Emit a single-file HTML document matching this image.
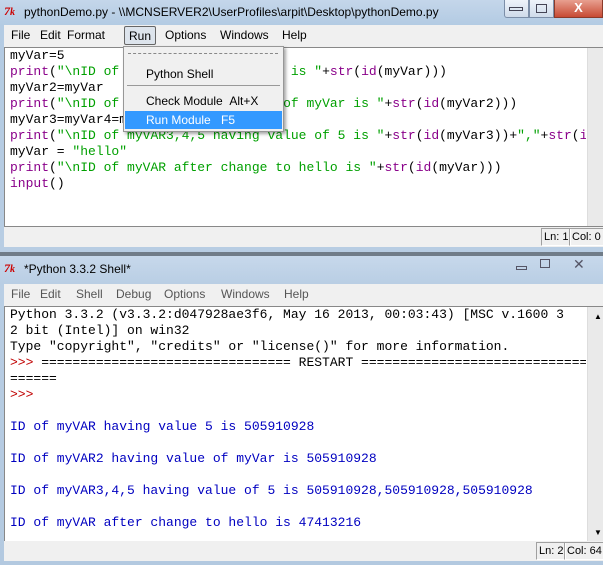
<!DOCTYPE html>
<html><head><style>
*{margin:0;padding:0;box-sizing:border-box}
body{width:603px;height:565px;overflow:hidden;background:#aac3dc;font-family:"Liberation Sans",sans-serif;position:relative}
.abs{position:absolute}
.title{font-size:12px;color:#000;white-space:nowrap}
.menu{font-size:12px;color:#000;white-space:nowrap;background:#f0f0f0}
.menu span{position:absolute;top:3px}
.code{font-family:"Liberation Mono",monospace;font-size:13px;line-height:16px;white-space:pre;background:#fff}
.p{color:#8a008a}.g{color:#00a000}.b{color:#0000c0}.r{color:#c00000}
.tk{color:#c00;font-style:italic;font-weight:bold;font-family:"Liberation Serif",serif;font-size:12px}
.btn{position:absolute;border:1px solid #7c8ea8;border-radius:0 0 3px 3px;background:linear-gradient(#eef3fa,#cfdbea)}
.sb{background:#eaeaea;border-left:1px solid #ddd}
.status{background:#f0f0f0;font-size:11px}
.cell{position:absolute;border:1px solid #a0a0a0;border-right-color:#fff;border-bottom-color:#fff;padding:1px 2px;height:18px;line-height:15px;font-size:11px}
</style></head><body>
<!-- top window -->
<div class="abs" style="left:0;top:0;width:603px;height:252px;background:linear-gradient(#c4d6ea,#b3cbe3 25px,#b8cde3)"></div>
<div class="abs tk" style="left:4px;top:4px">7<span style="font-size:10px">k</span></div>
<div class="abs title" style="left:24px;top:5px">pythonDemo.py - \\MCNSERVER2\UserProfiles\arpit\Desktop\pythonDemo.py</div>
<div class="btn" style="left:504px;top:0;width:25px;height:18px;border-top:none;border-radius:0 0 0 3px"></div>
<div class="btn" style="left:529px;top:0;width:25px;height:18px;border-top:none;border-radius:0"></div>
<div class="abs" style="left:554px;top:0;width:49px;height:18px;background:linear-gradient(#e8a090,#c74a34);border:1px solid #8b3a2a;border-top:none;color:#fff;font-weight:bold;text-align:center;font-size:13px">X</div>
<div class="abs" style="left:509px;top:7px;width:14px;height:4px;border:1px solid #445"></div>
<div class="abs" style="left:536px;top:4px;width:11px;height:9px;border:1px solid #445"></div>

<div class="abs menu" style="left:4px;top:25px;width:599px;height:22px">
<span style="left:7px">File</span><span style="left:36px">Edit</span><span style="left:63px">Format</span>
<span style="left:120px;top:1px;width:32px;height:19px;border:1px solid #666;border-radius:2px;background:#dde4ec;padding:2px 0 0 4px">Run</span>
<span style="left:161px">Options</span><span style="left:216px">Windows</span><span style="left:278px">Help</span></div>
<div class="abs" style="left:4px;top:47px;width:599px;height:180px;background:#fff;border:1px solid #888"></div>
<div class="abs code" style="left:10px;top:48px;width:576px;height:176px;overflow:hidden">myVar=5
<span class="p">print</span>(<span class="g">"\nID of myVAR having value 5 is "</span>+<span class="p">str</span>(<span class="p">id</span>(myVar)))
myVar2=myVar
<span class="p">print</span>(<span class="g">"\nID of myVAR2 having value of myVar is "</span>+<span class="p">str</span>(<span class="p">id</span>(myVar2)))
myVar3=myVar4=myVar5=5
<span class="p">print</span>(<span class="g">"\nID of myVAR3,4,5 having value of 5 is "</span>+<span class="p">str</span>(<span class="p">id</span>(myVar3))+<span class="g">","</span>+<span class="p">str</span>(<span class="p">id</span>(myVar4))
myVar = <span class="g">"hello"</span>
<span class="p">print</span>(<span class="g">"\nID of myVAR after change to hello is "</span>+<span class="p">str</span>(<span class="p">id</span>(myVar)))
<span class="p">input</span>()</div>
<div class="abs sb" style="left:587px;top:48px;width:16px;height:178px"></div>
<div class="abs status" style="left:4px;top:227px;width:599px;height:20px"></div>
<div class="cell" style="left:541px;top:228px">Ln: 1</div>
<div class="cell" style="left:569px;top:228px;width:40px">Col: 0</div>

<!-- dropdown -->
<div class="abs" style="left:123px;top:46px;width:161px;height:86px;background:#f0f0f0;border:1px solid #979797;box-shadow:2px 2px 3px rgba(0,0,0,.35);font-size:12px">
<div class="abs" style="left:4px;top:6px;width:150px;border-top:1px dashed #888"></div>
<div class="abs" style="left:22px;top:20px">Python Shell</div>
<div class="abs" style="left:3px;top:38px;width:153px;border-top:1px solid #999"></div>
<div class="abs" style="left:22px;top:47px">Check Module&nbsp;&nbsp;Alt+X</div>
<div class="abs" style="left:1px;top:64px;width:157px;height:18px;background:#3399ff;color:#fff"><span style="position:absolute;left:21px;top:2px">Run Module</span><span style="position:absolute;left:96px;top:2px">F5</span></div>
</div>

<!-- bottom window -->
<div class="abs" style="left:0;top:252px;width:603px;height:5px;background:#707c88"></div>
<div class="abs" style="left:0;top:256px;width:603px;height:309px;background:linear-gradient(#c7d8eb,#b9cee4 28px,#b3c9e0)"></div>
<div class="abs tk" style="left:4px;top:261px">7<span style="font-size:10px">k</span></div>
<div class="abs title" style="left:24px;top:262px">*Python 3.3.2 Shell*</div>
<div class="abs" style="left:516px;top:266px;width:11px;height:4px;border:1px solid #556"></div>
<div class="abs" style="left:540px;top:259px;width:10px;height:9px;border:1px solid #556"></div>
<div class="abs" style="left:573px;top:256px;color:#556;font-size:14px">✕</div>
<div class="abs menu" style="left:4px;top:284px;width:599px;height:22px;color:#555">
<span style="left:7px">File</span><span style="left:36px">Edit</span><span style="left:72px">Shell</span><span style="left:112px">Debug</span>
<span style="left:160px">Options</span><span style="left:217px">Windows</span><span style="left:280px">Help</span></div>
<div class="abs" style="left:4px;top:306px;width:599px;height:236px;background:#fff;border:1px solid #888"></div>
<div class="abs code" style="left:10px;top:307px;width:576px;height:232px;overflow:hidden">Python 3.3.2 (v3.3.2:d047928ae3f6, May 16 2013, 00:03:43) [MSC v.1600 3
2 bit (Intel)] on win32
Type "copyright", "credits" or "license()" for more information.
<span class="r">&gt;&gt;&gt;</span> ================================ RESTART ================================
======
<span class="r">&gt;&gt;&gt;</span> 

<span class="b">ID of myVAR having value 5 is 505910928</span>

<span class="b">ID of myVAR2 having value of myVar is 505910928</span>

<span class="b">ID of myVAR3,4,5 having value of 5 is 505910928,505910928,505910928</span>

<span class="b">ID of myVAR after change to hello is 47413216</span></div>
<div class="abs sb" style="left:587px;top:307px;width:16px;height:234px"></div>
<div class="abs" style="left:594px;top:312px;font-size:8px">▲</div>
<div class="abs" style="left:594px;top:528px;font-size:8px">▼</div>
<div class="abs status" style="left:4px;top:541px;width:599px;height:20px"></div>
<div class="cell" style="left:536px;top:542px">Ln: 2</div>
<div class="cell" style="left:564px;top:542px;width:45px">Col: 64</div>
</body></html>
